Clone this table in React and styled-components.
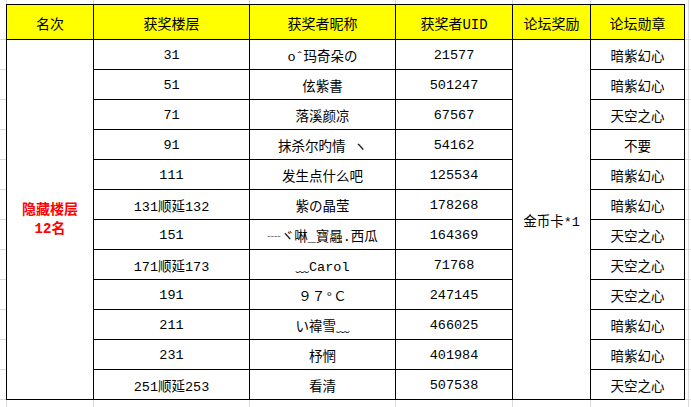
import React from "react";
import styled, { createGlobalStyle } from "styled-components";

const GlobalStyle = createGlobalStyle`
  html, body {
    margin: 0;
    padding: 0;
    background: #ffffff;
  }
`;

const rows = [
  ["31", "oˆ玛奇朵の", "21577", "暗紫幻心"],
  ["51", "伭紫書", "501247", "暗紫幻心"],
  ["71", "落溪颜凉", "67567", "天空之心"],
  ["91", "抹杀尔旳情 ヽ", "54162", "不要"],
  ["111", "发生点什么吧", "125534", "暗紫幻心"],
  ["131顺延132", "紫の晶莹", "178268", "暗紫幻心"],
  ["151", "┈ヾ啉_寶曧.西瓜", "164369", "天空之心"],
  ["171顺延173", "﹏Carol", "71768", "天空之心"],
  ["191", "９７°Ｃ", "247145", "天空之心"],
  ["211", "い禕雪﹏", "466025", "暗紫幻心"],
  ["231", "杼惘", "401984", "暗紫幻心"],
  ["251顺延253", "看清", "507538", "天空之心"],
];

const headers = ["名次", "获奖楼层", "获奖者昵称", "获奖者UID", "论坛奖励", "论坛勋章"];

// spreadsheet grid lines behind the table
const grid = "#d9d9d9";
const vLine = `linear-gradient(${grid}, ${grid})`;
const vx = [6, 93, 249, 395, 512, 590, 688];

function App() {
  return (
    <>
      <GlobalStyle />
      <Sheet>
        <Table>
          {headers.map((h) => (
            <Head key={h}>{h}</Head>
          ))}
          <Merged $col={1}>
            <Hidden>
              隐藏楼层
              <br />
              12名
            </Hidden>
          </Merged>
          {rows.map((r, i) => (
            <React.Fragment key={i}>
              <Cell $col={2} $row={i + 2}>{r[0]}</Cell>
              <Cell $col={3} $row={i + 2}>{r[1]}</Cell>
              <Cell $col={4} $row={i + 2}>{r[2]}</Cell>
              <Cell $col={6} $row={i + 2}>{r[3]}</Cell>
            </React.Fragment>
          ))}
          <Merged $col={5}>金币卡*1</Merged>
        </Table>
      </Sheet>
    </>
  );
}

//styles

const Sheet = styled.div`
  width: 691px;
  height: 407px;
  box-sizing: border-box;
  padding: 4px 0 0 6px;
  overflow: hidden;
  background-image: ${vx.map(() => vLine).join(", ")},
    linear-gradient(#ffffff, #ffffff),
    linear-gradient(to bottom, ${grid} 1px, transparent 1px);
  background-size: ${vx.map(() => "1px 100%").join(", ")}, 100% 39px,
    100% 30px;
  background-position: ${vx.map((x) => `${x}px 0`).join(", ")}, 0 0, 0 9px;
  background-repeat: ${vx.map(() => "no-repeat").join(", ")}, no-repeat,
    repeat-y;
`;

const Table = styled.div`
  display: grid;
  grid-template-columns: 87px 156px 146px 117px 78px 94px;
  grid-template-rows: 35px repeat(12, 30px);
  width: max-content;
  border-left: 1px solid #000;
  border-top: 1px solid #000;
  background: #ffffff;
  font-family: "Liberation Mono", "Noto Sans CJK SC", monospace;
  font-size: 13.5px;
  color: #000;
`;

const Cell = styled.div`
  grid-column: ${(p) => p.$col};
  grid-row: ${(p) => p.$row};
  box-sizing: border-box;
  border-right: 1px solid #000;
  border-bottom: 1px solid #000;
  display: flex;
  align-items: center;
  justify-content: center;
  white-space: nowrap;
  padding-top: 1px;
`;

const Head = styled(Cell)`
  grid-row: 1;
  grid-column: auto;
  background: #ffff00;
  font-size: 14px;
  padding-top: 2px;
`;

const Merged = styled(Cell)`
  grid-row: 2 / span 12;
`;

const Hidden = styled.div`
  color: #ff0000;
  font-weight: bold;
  font-size: 14px;
  line-height: 19px;
  text-align: center;
`;

export default App;
